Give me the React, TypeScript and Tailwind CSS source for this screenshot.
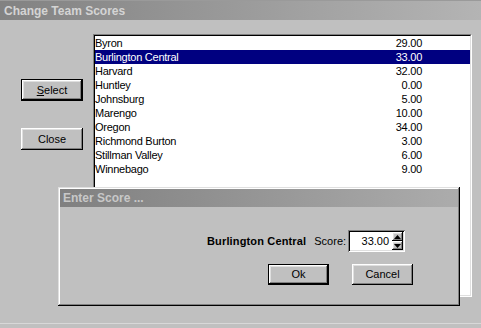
import React from 'react'

const teams = [
    { name: 'Byron', score: '29.00' },
    { name: 'Burlington Central', score: '33.00' },
    { name: 'Harvard', score: '32.00' },
    { name: 'Huntley', score: '0.00' },
    { name: 'Johnsburg', score: '5.00' },
    { name: 'Marengo', score: '10.00' },
    { name: 'Oregon', score: '34.00' },
    { name: 'Richmond Burton', score: '3.00' },
    { name: 'Stillman Valley', score: '6.00' },
    { name: 'Winnebago', score: '9.00' },
]

const raised = 'shadow-[inset_-1px_-1px_#000,inset_1px_1px_#fff,inset_-2px_-2px_#808080,inset_2px_2px_#dfdfdf]'

const WinButton = ({ children, isDefault = false, className = '' }: { children: React.ReactNode, isDefault?: boolean, className?: string }) => {
    return (
        <div className={`${isDefault ? 'border border-black' : ''} ${className}`}>
            <button className={`w-full h-full bg-[#c0c0c0] text-black text-[11px] ${raised} flex items-center justify-center`}>
                {children}
            </button>
        </div>
    )
}

const App = () => {
    return (
        <div className="w-[481px] h-[328px] bg-[#c0c0c0] overflow-hidden relative font-['Liberation_Sans',Arial,sans-serif] select-none">
            {/* main title bar */}
            <div className="h-[20px] bg-gradient-to-r from-[#828282] to-[#b4b4b4] flex items-center px-[4px] border-t border-[#9a9a9a]">
                <span className="text-[12px] font-bold text-[#d4d4d4]">Change Team Scores</span>
            </div>

            <div className="flex pt-[14px]">
                <div className="w-[93px] pl-[21px] pt-[45px] flex flex-col gap-[27px]">
                    <WinButton isDefault className="w-[62px] h-[22px]">
                        <span><span className="underline">S</span>elect</span>
                    </WinButton>
                    <WinButton className="w-[62px] h-[22px]">Close</WinButton>
                </div>

                {/* list box */}
                <div className="w-[379px] h-[263px] border-t border-l border-[#808080] border-r-white border-b-white border-r border-b">
                    <div className="w-full h-full bg-white border-t border-l border-black border-r border-b border-r-[#dfdfdf] border-b-[#dfdfdf]">
                        {teams.map((t, i) => (
                            <div key={t.name} className={`h-[14px] flex items-center text-[11px] tracking-[-0.25px] ${i === 1 ? 'bg-[#000080] text-white' : 'text-black'}`}>
                                <span className="flex-1">{t.name}</span>
                                <span className="w-[60px] text-right pr-[48px] box-content">{t.score}</span>
                            </div>
                        ))}
                    </div>
                </div>
            </div>

            <div className="absolute left-0 right-0 top-[323px] h-px bg-[#d8d8d8]"></div>

            {/* Enter Score dialog */}
            <div className="absolute left-[58px] top-[187px] w-[402px] h-[119px] bg-[#c0c0c0] shadow-[inset_-1px_-1px_#000,inset_1px_1px_#dfdfdf,inset_-2px_-2px_#808080,inset_2px_2px_#fff] p-[2px] flex flex-col">
                <div className="h-[18px] bg-gradient-to-r from-[#808080] to-[#acacac] flex items-center px-[3px]">
                    <span className="text-[12px] font-bold text-[#c8c8c8]">Enter Score ...</span>
                </div>

                <div className="flex items-center pl-[147px] mt-[23px] h-[22px]">
                    <span className="text-[11px] font-bold text-black tracking-[0.15px]">Burlington Central</span>
                    <span className="text-[11px] text-black ml-[8px]">Score:</span>
                    <div className="ml-[2px] w-[57px] h-[22px] bg-white flex shadow-[inset_1px_1px_#808080,inset_-1px_-1px_#fff,inset_2px_2px_#000,inset_-2px_-2px_#dfdfdf] p-[2px]">
                        <span className="flex-1 text-right text-[11px] text-black pr-[3px] leading-[18px]">33.00</span>
                        <div className="w-[11px] flex flex-col">
                            <div className={`flex-1 bg-[#c0c0c0] ${raised} flex items-center justify-center`}>
                                <svg width="7" height="4" viewBox="0 0 7 4"><path d="M3.5 0 L7 4 L0 4 Z" fill="#000" /></svg>
                            </div>
                            <div className={`flex-1 bg-[#c0c0c0] ${raised} flex items-center justify-center`}>
                                <svg width="7" height="4" viewBox="0 0 7 4"><path d="M0 0 L7 0 L3.5 4 Z" fill="#000" /></svg>
                            </div>
                        </div>
                    </div>
                </div>

                <div className="flex pl-[208px] mt-[12px] gap-[23px]">
                    <WinButton isDefault className="w-[61px] h-[21px]">Ok</WinButton>
                    <WinButton className="w-[61px] h-[21px]">Cancel</WinButton>
                </div>
            </div>
        </div>
    )
}

export default App
